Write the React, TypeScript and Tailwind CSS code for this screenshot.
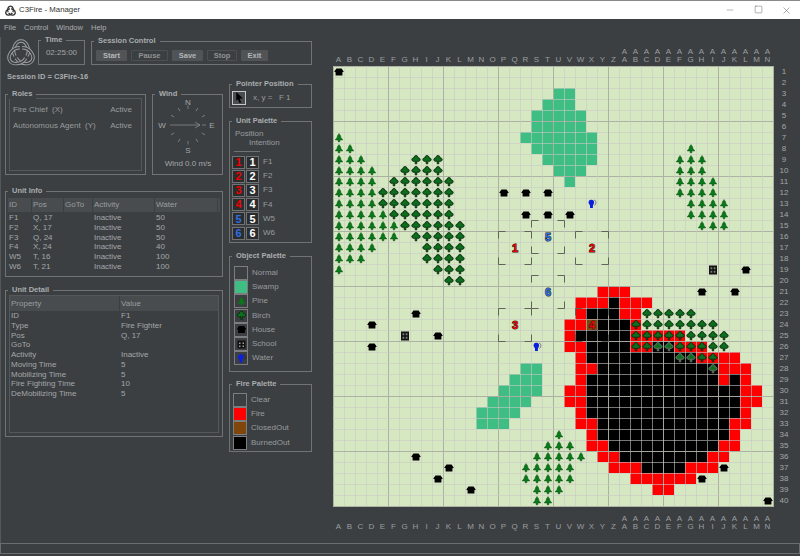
import type { ReactNode } from "react";
import { Minus, Square, X } from "lucide-react";

const CELL = 11;
const colName = (i: number) => (i < 26 ? String.fromCharCode(65 + i) : "A" + String.fromCharCode(39 + i));
const colIndex = (s: string) => (s.length === 1 ? s.charCodeAt(0) - 65 : 26 + s.charCodeAt(1) - 65);
const columns = (spec: string) =>
  spec.split(" ").flatMap((part) => {
    const [a, b = a] = part.split("-");
    const out: number[] = [];
    for (let i = colIndex(a); i <= colIndex(b); i++) out.push(i);
    return out;
  });
type Layer = Record<number, string>;
const expand = (layer: Layer) =>
  Object.entries(layer).flatMap(([row, spec]) => columns(spec).map((c) => [c, Number(row) - 1] as const));

const swamp: Layer = {
  3: "U-V", 4: "T-V", 5: "S-W", 6: "S-W", 7: "R-X", 8: "S-X", 9: "T-X", 10: "U-W", 11: "V",
  28: "R-S", 29: "Q-S", 30: "P-S", 31: "O-R", 32: "N-Q", 33: "N-P",
};
const red: Layer = {
  21: "Y-AA", 22: "W-Y AA-AC", 23: "W AA-AB", 24: "V-W AB", 25: "V AB-AF", 26: "V-W AB-AC AF-AH",
  27: "W AH-AK", 28: "W-X AJ-AL", 29: "W AJ AL", 30: "V-W AL-AM", 31: "V-W AL-AM", 32: "W AL",
  33: "W-X AK-AL", 34: "X AK", 35: "X-Y AJ-AK", 36: "Y-Z AI-AJ", 37: "Z-AB AG-AI", 38: "AB-AG", 39: "AD-AE",
};
const burned: Layer = {
  22: "Z", 23: "X-Z", 24: "Y-AA", 25: "W-AA", 26: "X-AA AD-AE", 27: "X-AG", 28: "Y-AI", 29: "X-AI AK",
  30: "X-AK", 31: "X-AK", 32: "X-AK", 33: "Y-AJ", 34: "Y-AJ", 35: "Z-AI", 36: "AA-AH", 37: "AC-AF",
};
const pines: Layer = {
  7: "A", 8: "A-B AG", 9: "A-C AF-AH", 10: "A-D AF-AH", 11: "A-D AF-AI", 12: "A-D AF-AI", 13: "A-D AG-AJ",
  14: "A-E AG-AJ", 15: "A-F AH-AJ", 16: "A-F", 17: "A-D", 18: "A-C", 19: "A",
  34: "U", 35: "T-V", 36: "S-W", 37: "R-V", 38: "R-V", 39: "S-U", 40: "S-T",
};
const birches: Layer = {
  9: "H-J", 10: "G-J", 11: "F-K", 12: "E-K", 13: "E-K", 14: "F-K", 15: "G-L", 16: "H-L", 17: "I-L", 18: "I-L",
  19: "J-L", 20: "K-L", 23: "AC-AG", 24: "AB-AI", 25: "AB-AJ", 26: "AB-AJ", 27: "AF-AI", 28: "AI",
};
const houses: [string, number][] = [
  ["A", 1], ["P", 12], ["R", 12], ["T", 12], ["R", 14], ["T", 14], ["V", 14], ["AL", 19], ["AH", 21], ["AK", 21],
  ["H", 23], ["D", 24], ["J", 25], ["D", 26], ["H", 36], ["K", 37], ["AJ", 37], ["J", 38], ["AH", 38], ["M", 39], ["AN", 40],
];
const units: [string, number, string, string][] = [
  ["T", 16, "5", "#2f6fe0"], ["Q", 17, "1", "#f00000"], ["X", 17, "2", "#f00000"],
  ["T", 21, "6", "#2f6fe0"], ["Q", 24, "3", "#f00000"], ["X", 24, "4", "#f00000"],
];
const burnedSet = new Set(expand(burned).map(([c, r]) => `${c}-${r}`));

const PINE = "M0-4.5 2-1.6H1.2L3.8 2H.9V3.8H-.9V2H-3.8L-1.2-1.6H-2Z";
const BIRCH = "M0-4.4C1.5-4.4 2.2-3.2 1.9-2.2 3.4-2.4 4.4-1.2 4.1 0 3.8 1.3 2.2 1.7.8 1V3.8H-.8V1C-2.2 1.7-3.8 1.3-4.1 0-4.4-1.2-3.4-2.4-1.9-2.2-2.2-3.2-1.5-4.4 0-4.4Z";
const HOUSE = "M-2.6-3.4H2.6L4.8-.2 3.4.2V3.4H-3.4V.2L-4.8-.2Z";
const WATER = "M-.8-4.2C1.8-4.2 2.6-2.2 1.9-.4L.9 1.4V4H-2V1.4L-3.2-.4C-3.9-2.2-3-4.2-.8-4.2Z";
const at = (c: number, r: number) => `translate(${c * CELL + 6} ${r * CELL + 6})`;

function School({ c, r }: { c: number; r: number }) {
  return (
    <g transform={at(c, r)}>
      <rect x="-4" y="-4.500" width="8" height="9" fill="#111" />
      <path d="M-2.500-2.800h1.800v2h-1.800ZM.7-2.800h1.800v2H.7ZM-2.500.7h1.800v2h-1.800ZM.7.7h1.800v2H.7Z" fill="#777" />
    </g>
  );
}

function Water({ c, r }: { c: number; r: number }) {
  return (
    <g transform={at(c, r)}>
      <path d="M2-4C4.400-3.600 4.400.4 2.400 1.400" fill="none" stroke="#666" strokeWidth="0.9" />
      <path d={WATER} fill="#0a1fe0" />
    </g>
  );
}

function Brackets({ c, r }: { c: number; r: number }) {
  const x0 = (c - 1) * CELL + 0.5;
  const y0 = (r - 1) * CELL + 0.5;
  const x1 = x0 + 33;
  const y1 = y0 + 33;
  const l = 7;
  return (
    <path
      d={`M${x0} ${y0 + l}V${y0}H${x0 + l}M${x1 - l} ${y0}H${x1}V${y0 + l}M${x0} ${y1 - l}V${y1}H${x0 + l}M${x1 - l} ${y1}H${x1}V${y1 - l}`}
      fill="none"
      stroke="#60635a"
      strokeWidth="1"
    />
  );
}

function GameMap() {
  const grid = Array.from({ length: 41 }, (_, i) => i);
  return (
    <svg width="441" height="441" className="block">
      <rect width="441" height="441" fill="#d6e8c1" />
      {expand(swamp).map(([c, r]) => <rect key={`s${c}-${r}`} x={c * CELL} y={r * CELL} width={CELL} height={CELL} fill="#3fbe84" />)}
      {expand(red).map(([c, r]) => <rect key={`f${c}-${r}`} x={c * CELL} y={r * CELL} width={CELL} height={CELL} fill="#ff0000" />)}
      {expand(burned).map(([c, r]) => <rect key={`b${c}-${r}`} x={c * CELL} y={r * CELL} width={CELL} height={CELL} fill="#000" />)}
      <rect x={23 * CELL} y={23 * CELL} width={CELL} height={CELL} fill="#80450a" />
      {grid.map((i) => (
        <g key={i} fill={i % 5 === 0 ? "#abafa3" : "#c9c9c6"} opacity={i % 5 === 0 ? 0.95 : 0.6}>
          <rect x={i * CELL} y={0} width={1} height={441} />
          <rect x={0} y={i * CELL} width={441} height={1} />
        </g>
      ))}
      {expand(pines).map(([c, r]) => (
        <path key={`p${c}-${r}`} transform={at(c, r)} d={PINE} fill="#067a18" stroke="#0a3a12" strokeWidth="0.4" />
      ))}
      {expand(birches).map(([c, r]) => (
        <path
          key={`t${c}-${r}`}
          transform={at(c, r)}
          d={BIRCH}
          fill="#0d6f1d"
          stroke={burnedSet.has(`${c}-${r}`) ? "#777" : "#06240b"}
          strokeWidth="0.9"
        />
      ))}
      {houses.map(([c, r]) => <path key={`h${c}${r}`} transform={at(colIndex(c), r - 1)} d={HOUSE} fill="#000" />)}
      <School c={colIndex("G")} r={24} />
      <School c={colIndex("AI")} r={18} />
      <Water c={colIndex("X")} r={12} />
      <Water c={colIndex("S")} r={25} />
      {units.map(([c, r]) => <Brackets key={`k${c}${r}`} c={colIndex(c)} r={r - 1} />)}
      {units.map(([c, r, n, color]) => (
        <text
          key={n}
          x={colIndex(c) * CELL + 6}
          y={(r - 1) * CELL + 10}
          textAnchor="middle"
          fontFamily="'Liberation Sans', sans-serif"
          fontWeight="700"
          fontSize="11"
          fill={color}
          stroke="#222"
          strokeWidth="1"
          paintOrder="stroke"
        >
          {n}
        </text>
      ))}
    </svg>
  );
}

function Knot({ size, color, inner }: { size: number; color: string; inner?: string }) {
  const lobe = "M8 18C4 11 9 3 14 3 19 3 24 11 20 18";
  return (
    <svg width={size} height={size} viewBox="0 0 28 28" className="shrink-0">
      {[0, 120, 240].map((a) => (
        <g key={a} transform={`rotate(${a} 14 16)`} fill="none">
          <path d={lobe} stroke={color} strokeWidth="3.4" />
          {inner && <path d={lobe} stroke={inner} strokeWidth="1.500" />}
        </g>
      ))}
    </svg>
  );
}

function Group({ title, className, children }: { title: string; className: string; children?: ReactNode }) {
  return (
    <div className={`relative border border-[#707274] ${className}`}>
      <span className="absolute -top-[6px] left-[2px] bg-[#3c3f41] px-[4px] text-[7.5px] font-bold leading-[10px] text-[#a9adb0]">
        {title}
      </span>
      {children}
    </div>
  );
}

function SessionButton({ label, width, on }: { label: string; width: string; on: boolean }) {
  return (
    <div
      className={`flex h-[11px] items-center justify-center rounded-[1px] text-[7.5px] font-bold ${width} ${
        on ? "bg-[#505456] text-[#b4b7b9]" : "border border-[#4d5052] text-[#8f9294]"
      }`}
    >
      {label}
    </div>
  );
}

function Compass() {
  const ticks = [30, 60, 120, 150, 210, 240, 300, 330, 0, 180];
  return (
    <svg width="68" height="79" className="block">
      <g transform="translate(35 30)" stroke="#8f9295" strokeWidth="0.7">
        {ticks.map((a) => (
          <line key={a} x1="0" y1="-16" x2="0" y2="-19.500" transform={`rotate(${a})`} />
        ))}
        <line x1="-18" y1="0" x2="12" y2="0" />
        <path d="M7-3 12 0 7 3M14 0H18" fill="none" />
      </g>
      <g fill="#a3a7aa" fontSize="8" fontFamily="'Liberation Sans', sans-serif" textAnchor="middle">
        <text x="35" y="10">N</text>
        <text x="35" y="58">S</text>
        <text x="9" y="33">W</text>
        <text x="59" y="33">E</text>
        <text x="35" y="71">Wind 0.0 m/s</text>
      </g>
    </svg>
  );
}

const unitRows = [
  ["F1", "Q, 17", "", "Inactive", "50"],
  ["F2", "X, 17", "", "Inactive", "50"],
  ["F3", "Q, 24", "", "Inactive", "50"],
  ["F4", "X, 24", "", "Inactive", "40"],
  ["W5", "T, 16", "", "Inactive", "100"],
  ["W6", "T, 21", "", "Inactive", "100"],
];
const detailRows = [
  ["ID", "F1"], ["Type", "Fire Fighter"], ["Pos", "Q, 17"], ["GoTo", ""], ["Activity", "Inactive"],
  ["Moving Time", "5"], ["Mobilizing Time", "5"], ["Fire Fighting Time", "10"], ["DeMobilizing Time", "5"],
];
const unitCols = ["w-[24px]", "w-[32px]", "w-[29px]", "w-[62px]", "w-[63px]"];

function LeftColumn() {
  return (
    <div className="w-[218px]">
      <div className="mt-[6px] h-[10px] pl-[2px] text-[7.5px] font-bold leading-[10px] text-[#a9adb0]">Session ID = C3Fire-16</div>
      <div className="mt-[12px] flex gap-[6px]">
        <Group title="Roles" className="h-[81px] w-[141px] p-[3px]">
          <div className="h-full border border-[#55585a] px-[3px] pt-[3px] text-[8px] text-[#989c9f]">
            <div className="flex h-[16px] items-center justify-between pr-[6px]"><span className="whitespace-pre">Fire Chief  (X)</span><span>Active</span></div>
            <div className="flex h-[16px] items-center justify-between pr-[6px]"><span className="whitespace-pre">Autonomous Agent  (Y)</span><span>Active</span></div>
          </div>
        </Group>
        <Group title="Wind" className="h-[81px] w-[71px]"><Compass /></Group>
      </div>
      <Group title="Unit Info" className="mt-[16px] h-[86px] p-[2px] pt-[6px]">
        <div className="flex h-[14px] items-center bg-[#484c4e] text-[8px] text-[#9a9ea1]">
          {["ID", "Pos", "GoTo", "Activity", "Water"].map((h, i) => (
            <div key={h} className={`h-full border-r border-[#3c3f41] pl-[1px] leading-[14px] ${unitCols[i]}`}>{h}</div>
          ))}
        </div>
        <div className="pt-[1px] text-[8px] text-[#a3a7aa]">
          {unitRows.map((row) => (
            <div key={row[0]} className="flex h-[9.85px] items-center">
              {row.map((v, i) => <div key={i} className={`pl-[1px] ${unitCols[i]}`}>{v}</div>)}
            </div>
          ))}
        </div>
      </Group>
      <Group title="Unit Detail" className="mt-[13px] h-[147px] p-[3px] pt-[4px]">
        <div className="h-full border border-[#55585a]">
          <div className="flex h-[15px] items-center bg-[#484c4e] text-[8px] text-[#9a9ea1]">
            <div className="h-full w-[110px] border-r border-[#3c3f41] pl-[1px] leading-[15px]">Property</div>
            <div className="pl-[1px]">Value</div>
          </div>
          <div className="text-[8px] text-[#a3a7aa]">
            {detailRows.map(([k, v]) => (
              <div key={k} className="flex h-[9.8px] items-center">
                <div className="w-[110px] pl-[1px]">{k}</div>
                <div className="pl-[1px]">{v}</div>
              </div>
            ))}
          </div>
        </div>
      </Group>
    </div>
  );
}

function PaletteSwatch({ className, children }: { className: string; children?: ReactNode }) {
  return (
    <div className="flex h-[14px] w-[14px] shrink-0 items-center justify-center border border-[#7b7d7f] bg-[#3c3f41]">
      <div className={`flex h-[12px] w-[12px] items-center justify-center ${className}`}>{children}</div>
    </div>
  );
}

function MiniIcon({ children }: { children: ReactNode }) {
  return <svg width="11" height="11" viewBox="-5.500 -5.500 11 11">{children}</svg>;
}

const unitPalette = [
  ["1", "F1", "text-[#f00000]"], ["2", "F2", "text-[#f00000]"], ["3", "F3", "text-[#f00000]"],
  ["4", "F4", "text-[#f00000]"], ["5", "W5", "text-[#2f6fe0]"], ["6", "W6", "text-[#2f6fe0]"],
];

function RightColumn() {
  const objects: [string, ReactNode, string][] = [
    ["Normal", null, ""],
    ["Swamp", null, "bg-[#3fbe84]"],
    ["Pine", <MiniIcon key="p"><path d={PINE} fill="#067a18" /></MiniIcon>, ""],
    ["Birch", <MiniIcon key="b"><path d={BIRCH} fill="#0d6f1d" stroke="#06240b" strokeWidth="0.8" /></MiniIcon>, ""],
    ["House", <MiniIcon key="h"><path d={HOUSE} fill="#000" /></MiniIcon>, ""],
    ["School", <MiniIcon key="s"><rect x="-4" y="-4" width="8" height="8" fill="#111" /><path d="M-2.500-2h1.500v1.400h-1.500ZM1-2h1.500v1.400H1ZM-2.500 1h1.500v1.400h-1.500ZM1 1h1.500v1.400H1Z" fill="#9a9a9a" /></MiniIcon>, ""],
    ["Water", <MiniIcon key="w"><path d="M2-4C4.400-3.600 4.400.4 2.400 1.400" fill="none" stroke="#222" strokeWidth="0.8" /><path d={WATER} fill="#0a1fe0" /></MiniIcon>, ""],
  ];
  const fires = [["Clear", ""], ["Fire", "bg-[#ff0000]"], ["ClosedOut", "bg-[#80450a]"], ["BurnedOut", "bg-black"]];
  return (
    <div className="ml-[6px] w-[83px] pt-[18px] text-[8px] text-[#989c9f]">
      <Group title="Pointer Position" className="flex h-[24px] items-center pl-[2px] pt-[3px]">
        <div className="flex h-[14px] w-[14px] items-center justify-center border border-[#c4c6c8] bg-[#4a4d4f]">
          <svg width="10" height="11" viewBox="0 0 9 10"><path d="M2 0 8 6H5L6.500 9.500 5 10 3.500 6.500 2 8Z" fill="#000" /></svg>
        </div>
        <span className="ml-[7px] whitespace-pre">x, y =   F 1</span>
      </Group>
      <Group title="Unit Palette" className="mt-[13px] h-[122px] pl-[2px] pt-[7px]">
        <div className="pl-[3px] leading-[9px]">Position</div>
        <div className="pl-[17px] leading-[9px]">Intention</div>
        <div className="ml-[2px] mt-[4px] h-px w-[26px] bg-[#707274]" />
        <div className="mt-[3px]">
          {unitPalette.map(([n, label, color]) => (
            <div key={n} className="flex h-[14.2px] items-center">
              <div className={`flex h-[13px] w-[13px] items-center justify-center border border-[#707274] bg-[#2a2c2e] text-[11px] font-bold ${color}`}>{n}</div>
              <div className="ml-[1px] flex h-[13px] w-[13px] items-center justify-center border border-[#707274] bg-[#2a2c2e] text-[11px] font-bold text-white">{n}</div>
              <span className="ml-[4px]">{label}</span>
            </div>
          ))}
        </div>
      </Group>
      <Group title="Object Palette" className="mt-[13px] h-[116px] pl-[4px] pt-[9px]">
        {objects.map(([label, icon, fill]) => (
          <div key={label} className="flex h-[14.2px] items-center">
            <PaletteSwatch className={fill}>{icon}</PaletteSwatch>
            <span className="ml-[4px]">{label}</span>
          </div>
        ))}
      </Group>
      <Group title="Fire Palette" className="mt-[12px] h-[68px] pl-[3px] pt-[8px]">
        {fires.map(([label, fill]) => (
          <div key={label} className="flex h-[14.2px] items-center">
            <PaletteSwatch className={fill} />
            <span className="ml-[4px]">{label}</span>
          </div>
        ))}
      </Group>
    </div>
  );
}

function ColumnLabels({ className }: { className: string }) {
  return (
    <div className={`flex text-[8px] leading-[8px] text-[#9a9ea1] ${className}`}>
      {Array.from({ length: 40 }, (_, i) => {
        const name = colName(i);
        return (
          <div key={name} className="flex w-[11px] flex-col items-center justify-end">
            {name.split("").map((ch, j) => <span key={j}>{ch}</span>)}
          </div>
        );
      })}
    </div>
  );
}

export default function App() {
  return (
    <div className="flex h-[556px] w-[800px] flex-col overflow-hidden bg-[#3c3f41] [font-family:'Liberation_Sans',sans-serif]">
      <div className="flex h-[19px] shrink-0 items-center border-t border-[#8a8a8a] bg-white pl-[5px] text-[7.8px] text-[#333]">
        <Knot size={11} color="#333" />
        <span className="ml-[3px]">C3Fire - Manager</span>
        <div className="ml-auto flex text-[#555]">
          <div className="flex w-[28px] justify-center"><Minus size={10} strokeWidth={1} /></div>
          <div className="flex w-[28px] justify-center"><Square size={9} strokeWidth={1.2} /></div>
          <div className="flex w-[28px] justify-center"><X size={11} strokeWidth={1} /></div>
        </div>
      </div>
      <div className="flex h-[18px] shrink-0 items-center gap-[8px] pl-[4px] text-[7.5px] text-[#a9adb0]">
        <span>File</span><span>Control</span><span>Window</span><span>Help</span>
      </div>
      <div className="flex h-[506px] shrink-0">
        <div className="w-[333px] shrink-0 border-l border-[#55585a] pl-[4px]">
          <div className="flex h-[29px] items-start">
            <div className="ml-[2px] mt-[1px]"><Knot size={28} color="#a0a3a6" inner="#3c3f41" /></div>
            <Group title="Time" className="ml-[3px] mt-[3px] flex h-[25px] w-[47px] items-center justify-center text-[8px] text-[#a3a7aa]">
              02:25:00
            </Group>
            <Group title="Session Control" className="ml-[6px] mt-[4px] flex h-[24px] w-[221px] gap-[4px] pl-[4px] pt-[8px]">
              <SessionButton label="Start" width="w-[31px]" on />
              <SessionButton label="Pause" width="w-[37px]" on={false} />
              <SessionButton label="Save" width="w-[31px]" on />
              <SessionButton label="Stop" width="w-[30px]" on={false} />
              <SessionButton label="Exit" width="w-[27px]" on />
            </Group>
          </div>
          <div className="flex">
            <LeftColumn />
            <RightColumn />
          </div>
        </div>
        <div className="w-[441px] shrink-0">
          <ColumnLabels className="h-[29px] items-end pb-[2px]" />
          <GameMap />
          <ColumnLabels className="h-[24px] items-end" />
        </div>
        <div className="flex-1 pl-[1px] pt-[29px] text-[8px] text-[#a3a7aa]">
          {Array.from({ length: 40 }, (_, i) => (
            <div key={i} className="flex h-[11px] w-[18px] items-center justify-center">{i + 1}</div>
          ))}
        </div>
      </div>
      <div className="h-[11px] shrink-0 border border-[#6a6c6e]" />
    </div>
  );
}
